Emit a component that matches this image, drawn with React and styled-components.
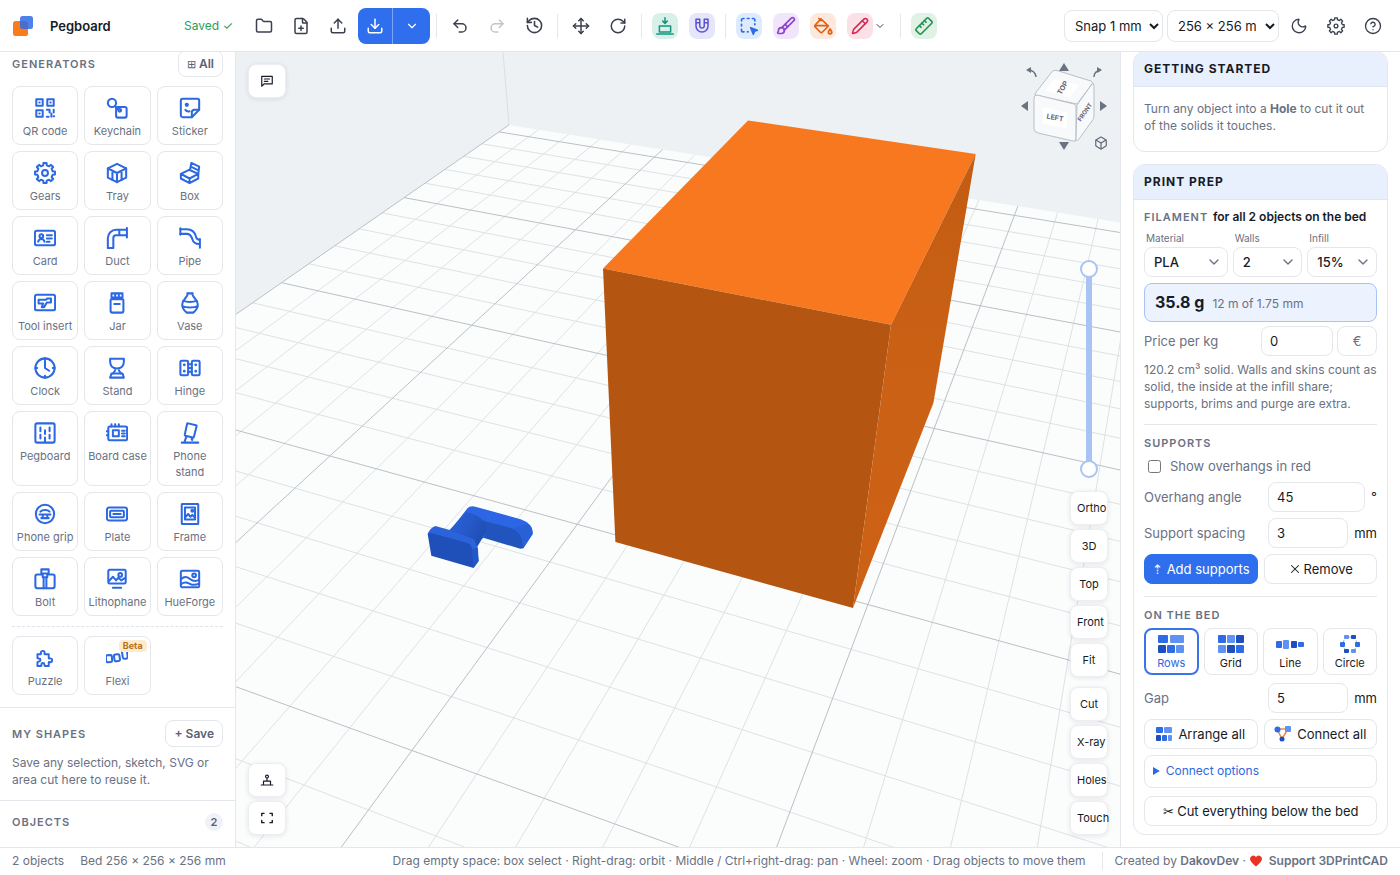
import { useState } from "react";
import styled, { createGlobalStyle, css } from "styled-components";
import {
  Box,
  Brush,
  ChevronDown,
  CircleQuestionMark,
  Download,
  FilePlus,
  Folder,
  History,
  Moon,
  Move,
  Pencil,
  Redo2,
  RotateCw,
  Undo2,
  Upload,
  X,
} from "lucide-react";

const GlobalStyle = createGlobalStyle`
  *, *::before, *::after {
    box-sizing: border-box;
  }
  body {
    margin: 0;
    background: #fff;
    color: #161b26;
    font-family: Inter, "Liberation Sans", sans-serif;
    font-size: 13px;
    line-height: 18px;
  }
  button, input, select {
    font: inherit;
    color: inherit;
  }
  button {
    cursor: pointer;
  }
`;

/* ---------- icons ---------- */

const gearPath = (teeth, outer, inner) => {
  const points = [];
  const step = (Math.PI * 2) / teeth;
  for (let i = 0; i < teeth; i++) {
    const mid = i * step - Math.PI / 2;
    [
      [-0.28, inner],
      [-0.2, outer],
      [0.2, outer],
      [0.28, inner],
    ].forEach(([offset, r]) => {
      const a = mid + offset * step;
      points.push(`${(12 + r * Math.cos(a)).toFixed(2)} ${(12 + r * Math.sin(a)).toFixed(2)}`);
    });
  }
  return `M${points.join("L")}Z`;
};

const GEAR = gearPath(8, 11, 8.6);

const Glyph = ({ size = 22, width = 2, children }) => (
  <svg
    width={size}
    height={size}
    viewBox="0 0 24 24"
    fill="none"
    stroke="currentColor"
    strokeWidth={width}
    strokeLinecap="round"
    strokeLinejoin="round"
    aria-hidden="true"
  >
    {children}
  </svg>
);

const generators = [
  {
    name: "QR code",
    icon: (
      <>
        <path d="M2.500 2.500h7v7h-7zM14.500 2.500h7v7h-7zM2.500 14.500h7v7h-7z" />
        <path d="M5.800 6h.4M17.800 6h.4M5.800 18h.4M14 14h3v3M21.500 14v3M14 21.500h2M19 18v3.500M22 21h-.5" />
      </>
    ),
  },
  {
    name: "Keychain",
    icon: (
      <>
        <circle cx="6.500" cy="6.500" r="4.500" />
        <path d="M10 10l3 3" />
        <rect x="11" y="11" width="11.500" height="11.500" rx="2" />
        <circle cx="15" cy="14.500" r="1.500" />
      </>
    ),
  },
  {
    name: "Sticker",
    icon: (
      <>
        <path d="M4 2h16a2 2 0 0 1 2 2v10l-8 8H4a2 2 0 0 1-2-2V4a2 2 0 0 1 2-2z" />
        <path d="M22 14h-5a3 3 0 0 0-3 3v5M7 14c1 1.500 3 2 4.500 1.500" />
        <circle cx="8.500" cy="8.500" r="1.200" fill="currentColor" />
      </>
    ),
  },
  {
    name: "Gears",
    icon: (
      <>
        <path d={GEAR} />
        <circle cx="12" cy="12" r="3.200" />
      </>
    ),
  },
  {
    name: "Tray",
    icon: (
      <>
        <path d="M12 2l10 5v10l-10 5-10-5V7z" />
        <path d="M2 7l10 5 10-5M12 12v10M7 9.500v10M17 9.500v10" />
      </>
    ),
  },
  {
    name: "Box",
    icon: (
      <>
        <path d="M2 13l9-4.500L21 13l-9.500 5zM2 13v5l9.500 5L21 18v-5M11.500 18v5" />
        <path d="M12 8.500l1.500-7.500 8.500 4-1 8M14 5.500l6 3" />
      </>
    ),
  },
  {
    name: "Card",
    icon: (
      <>
        <rect x="1" y="4" width="22" height="16" rx="2" />
        <circle cx="8" cy="10" r="2" />
        <path d="M4.500 16c.5-2 2-3 3.500-3s3 1 3.500 3M14 9h5.500M14 12.500h5.500M14 16h3" />
      </>
    ),
  },
  {
    name: "Duct",
    icon: (
      <>
        <path d="M2 23V12a9 9 0 0 1 9-9h11M8 23V12a3 3 0 0 1 3-3h11M2 23h6" />
        <path d="M22.800 1v10.500M14.500 3.500v5" />
      </>
    ),
  },
  {
    name: "Pipe",
    icon: (
      <>
        <path d="M1.500 2.500h7c7 0 9 4 10 8 .5 2.500 1.500 3.500 4 3.500M1.500 7.500h7c4 0 5 2.500 6 5.500.8 3 3 5.500 7.500 5.500" />
        <path d="M1.500 1.500v7M22.800 13v9.500" />
      </>
    ),
  },
  {
    name: "Tool insert",
    icon: (
      <>
        <rect x="1" y="3" width="22" height="17" rx="2" />
        <path d="M5 8.500h8l1.500-1.500h4v4.500h-4.500l-3 5H8.500l1.500-4H5z" />
      </>
    ),
  },
  {
    name: "Jar",
    icon: (
      <>
        <path d="M6 1.500h12V6H6zM6 8h12a1 1 0 0 1 1 1v11.500a2 2 0 0 1-2 2H7a2 2 0 0 1-2-2V9a1 1 0 0 1 1-1zM9 13h6" />
        <path d="M10 2v4M14 2v4" />
      </>
    ),
  },
  {
    name: "Vase",
    icon: (
      <path d="M9 1.500h6M9.500 2c0 4-6 6-6 11.500 0 4 2.500 7 5 9h7c2.500-2 5-5 5-9C20.500 8 14.500 6 14.500 2M4.500 9.500c4 2 11 2 15 0M3.500 15.500c4 2 13 2 17 0" />
    ),
  },
  {
    name: "Clock",
    icon: (
      <>
        <circle cx="12" cy="12" r="10.500" />
        <path d="M12 5v7l4.500 3M12 1.500v2M12 20.500v2M1.500 12h2M20.500 12h2" />
      </>
    ),
  },
  {
    name: "Stand",
    icon: (
      <>
        <path d="M4.500 2h15v3c0 5-3 7.500-7.500 7.500S4.500 10 4.500 5zM10 12.500c.5 3-1 4-2.500 5.500M14 12.500c-.5 3 1 4 2.500 5.500" />
        <path d="M6 18h12l1.500 4.500h-15z" />
      </>
    ),
  },
  {
    name: "Hinge",
    icon: (
      <>
        <rect x="1.500" y="4" width="8.500" height="16" rx="1.500" />
        <rect x="14" y="4" width="8.500" height="16" rx="1.500" />
        <path d="M10 8h4M10 12h4M10 16h4" />
        <path d="M5.700 8.500h.1M5.700 15.500h.1M18.200 8.500h.1M18.200 15.500h.1" strokeWidth="3" />
      </>
    ),
  },
  {
    name: "Pegboard",
    icon: (
      <>
        <rect x="1.500" y="1.500" width="21" height="21" rx="2" />
        <path d="M7 6v4M12 9v4M17 6v4M7 14v4M17 14v4M12 17v5" />
      </>
    ),
  },
  {
    name: "Board case",
    icon: (
      <>
        <rect x="2.500" y="5" width="20.500" height="15" rx="1.500" />
        <rect x="7.500" y="9" width="6.500" height="6.500" />
        <path d="M6 5V2.500M10 5V2.500M14 5V2.500M.8 10h1.500M.8 14.500h1.500M17.500 9.500h3M17.500 12.500h3M17.500 15.500h3" />
      </>
    ),
  },
  {
    name: "Phone stand",
    icon: (
      <>
        <path d="M10 1.500l8.500 2a1 1 0 0 1 .7 1.200l-3 11.600a1 1 0 0 1-1.200.7l-8-2a1 1 0 0 1-.7-1.200L8.800 2.200A1 1 0 0 1 10 1.500z" />
        <path d="M8 16l-2 6M3 22.500h18M14.500 17.500c-1 .5-1 2 0 2" />
      </>
    ),
  },
  {
    name: "Phone grip",
    icon: (
      <>
        <circle cx="12" cy="12" r="10" />
        <path d="M7 9.500c2-2.500 8-2.500 10 0M6 12.500h12M8 16.500h8M9.500 13v2.500M14.500 13v2.500" />
      </>
    ),
  },
  {
    name: "Plate",
    icon: (
      <>
        <rect x="1" y="5" width="22" height="14" rx="2.500" />
        <rect x="4.500" y="8.500" width="15" height="7" rx="1" />
        <path d="M8 12h8" />
      </>
    ),
  },
  {
    name: "Frame",
    icon: (
      <>
        <rect x="3" y="1" width="18" height="22" rx="1" />
        <rect x="6.500" y="5" width="11" height="13" />
        <path d="M7 15.500l3-3.500 2.500 3 2-2 2.500 2.500" />
        <circle cx="14.500" cy="8.500" r="1" />
      </>
    ),
  },
  {
    name: "Bolt",
    icon: (
      <>
        <path d="M8 7H3.500a2 2 0 0 0-2 2v11a2 2 0 0 0 2 2h17a2 2 0 0 0 2-2V9a2 2 0 0 0-2-2H16" />
        <path d="M8 1.500h8V6H8zM9.500 6v4h5V6M10.500 10v12M13.500 10v12" />
      </>
    ),
  },
  {
    name: "Lithophane",
    icon: (
      <>
        <rect x="2.500" y="2" width="19" height="15" rx="1.500" />
        <path d="M3.500 14l4-4.500 3.500 4 2.500-3 3 3L20.500 11M7.500 21.500h9" />
        <circle cx="15.500" cy="7.500" r="2" />
      </>
    ),
  },
  {
    name: "HueForge",
    icon: (
      <>
        <rect x="2" y="3" width="20" height="18" rx="1.500" />
        <path d="M2.500 12c4-4 7-2 9.500 0s6 3 10 1M2.500 17.500c4-3 7-1.500 10 0s6 1 9.500-.5" />
        <circle cx="16.500" cy="8" r="2" />
      </>
    ),
  },
];

const extraGenerators = [
  {
    name: "Puzzle",
    icon: (
      <path
        d="M4 6h4c1.200 0 .5-1 .5-2a2.500 2.500 0 0 1 5 0c0 1-.7 2 .5 2h5v5c0 1.200 1 .5 2 .5a2.300 2.300 0 0 1 0 5c-1 0-2-.7-2 .5v4.500h-5c-1 0-.5-1-.8-2a2 2 0 0 0-4 0c0 1 .3 2-.7 2H4v-5c0-1 1-.6 2-.8a2 2 0 0 0 0-4c-1-.2-2 .3-2-.7z"
        transform="translate(0.500 3) scale(0.820)"
        strokeWidth="2.600"
      />
    ),
  },
  {
    name: "Flexi",
    badge: "Beta",
    icon: (
      <>
        <rect x="0" y="9" width="6.500" height="7.500" rx="1.500" transform="rotate(-4 3 12)" />
        <rect x="9" y="8" width="6" height="7.500" rx="1.500" transform="rotate(-8 12 12)" />
        <path d="M17.500 5.500l.8 5.800a2 2 0 0 0 2.200 1.600l1.500-.2a2 2 0 0 0 1.600-2.200L23 5" />
      </>
    ),
  },
];

const DropIcon = () => (
  <Glyph size={18}>
    <path d="M12 1v7M9 5.500l3 3 3-3M4.500 12h15v8h-15zM1 22.500h22" />
  </Glyph>
);

const MagnetIcon = () => (
  <Glyph size={18}>
    <path d="M4 3h5v8.500a3 3 0 0 0 6 0V3h5v9a8 8 0 0 1-16 0zM4 7.500h5M15 7.500h5" />
  </Glyph>
);

const SelectIcon = () => (
  <Glyph size={20}>
    <path d="M3 6V5a2 2 0 0 1 2-2h1M10 3h2M16 3h1a2 2 0 0 1 2 2v1M3 10v2M3 16v1a2 2 0 0 0 2 2h1M10 19h1M19 9.500v1" />
    <path d="M14 14l8 3-3.500 1.300-1.300 3.500z" fill="currentColor" />
  </Glyph>
);

const BucketIcon = () => (
  <Glyph size={20}>
    <path d="M9.500 3.500l9 8.500-7.500 7.500a1.500 1.500 0 0 1-2.200 0L2.600 13a1.500 1.500 0 0 1 0-2.200zM7 3l2.500 2.500M2.500 11.500h15.500" />
    <path d="M20.500 15.500c1.200 1.800 2 2.800 2 4a2 2 0 0 1-4 0c0-1.200.8-2.200 2-4z" />
  </Glyph>
);

const RulerIcon = () => (
  <Glyph size={20}>
    <path d="M2.700 15.300L15.300 2.700a1.500 1.500 0 0 1 2.200 0l3.800 3.800a1.500 1.500 0 0 1 0 2.200L8.700 21.300a1.500 1.500 0 0 1-2.200 0l-3.800-3.800a1.500 1.500 0 0 1 0-2.200z" />
    <path d="M6.500 11.500l2 2M9.500 8.500l2 2M12.500 5.500l2 2" />
  </Glyph>
);

const SettingsIcon = () => (
  <Glyph size={18} width={1.8}>
    <path d={GEAR} />
    <circle cx="12" cy="12" r="2.500" />
  </Glyph>
);

const NoteIcon = () => (
  <Glyph size={14}>
    <path d="M3 21V4h18v13H7zM7.500 8.500h9M7.500 12.500h6" />
  </Glyph>
);

const PlaneIcon = () => (
  <Glyph size={14}>
    <path d="M12 9v5M6 14h12v6M6 14v6M2 20.500h20" />
    <circle cx="12" cy="6" r="2.500" />
  </Glyph>
);

const FullscreenIcon = () => (
  <Glyph size={14} width={2.4}>
    <path d="M3 8V4h4M17 4h4v4M21 16v4h-4M7 20H3v-4" />
  </Glyph>
);

const BLUE = "#2f6be6";
const LIGHT = "#5f92f2";
const DARK = "#1d4fc0";

const blocks = {
  Rows: [
    [0, 0, 10, 8, BLUE],
    [12, 0, 14, 8, LIGHT],
    [0, 10, 8, 8, DARK],
    [9, 10, 8, 8, BLUE],
    [18, 10, 8, 8, LIGHT],
  ],
  Grid: [
    [0, 0, 8, 8, BLUE],
    [9, 0, 8, 8, LIGHT],
    [18, 0, 8, 8, DARK],
    [0, 10, 8, 8, LIGHT],
    [9, 10, 8, 8, DARK],
    [18, 10, 8, 8, BLUE],
  ],
  Line: [
    [-1, 6, 6, 7, BLUE],
    [6, 5, 6, 9, LIGHT],
    [14, 6, 6, 7, DARK],
    [21, 7, 6, 5, BLUE],
  ],
  Circle: [
    [7, 0, 5, 4, LIGHT],
    [14, 0, 5, 4, DARK],
    [3, 7, 5, 5, BLUE],
    [18, 7, 5, 5, BLUE],
    [7, 14, 5, 4, DARK],
    [14, 14, 5, 4, LIGHT],
  ],
};

const BlockIcon = ({ name }) => (
  <svg width="28" height="18" viewBox="-1 0 28 18" aria-hidden="true">
    {name === "Circle" && (
      <circle cx="13" cy="9" r="7" fill="none" stroke="#9aa3b2" strokeDasharray="2 2" />
    )}
    {blocks[name].map(([x, y, w, h, fill]) => (
      <rect key={`${x}-${y}`} x={x} y={y} width={w} height={h} rx="1" fill={fill} />
    ))}
  </svg>
);

const ArrangeIcon = () => (
  <svg width="16" height="14" viewBox="0 0 16 14" aria-hidden="true">
    <rect width="7" height="6" rx="1" fill={BLUE} />
    <rect x="8" width="8" height="6" rx="1" fill={LIGHT} />
    <rect y="8" width="5" height="6" rx="1" fill={DARK} />
    <rect x="6" y="8" width="5" height="6" rx="1" fill={BLUE} />
    <rect x="12" y="8" width="4" height="6" rx="1" fill={LIGHT} />
  </svg>
);

const ConnectIcon = () => (
  <svg width="17" height="16" viewBox="0 0 17 16" aria-hidden="true">
    <path d="M3 3h11L8 13z" fill="none" stroke="#f08a3c" strokeWidth="1.500" />
    <circle cx="3.500" cy="3.500" r="3" fill={BLUE} />
    <rect x="11" y="0" width="6" height="6" rx="1" fill={LIGHT} />
    <circle cx="8" cy="13" r="2.500" fill={DARK} />
  </svg>
);

/* ---------- 3D scene ---------- */

const BED = 256;

// bed millimetres (from the back left corner) to screen
const project = (x, y) => {
  const w = 1 - 0.000901 * x - 0.00224 * y;
  return [
    ((272.9 + 2.689 * x - 2.247 * y) / w).toFixed(1),
    ((73 + 0.402 * x + 0.971 * y) / w).toFixed(1),
  ];
};

const line = (x1, y1, x2, y2) => `M${project(x1, y1).join(" ")}L${project(x2, y2).join(" ")}`;

const minorLines = [];
const majorLines = [];
for (let mm = 0; mm <= BED; mm += 10) {
  const target = mm % 50 === 0 ? majorLines : minorLines;
  target.push(line(mm, 0, mm, BED));
  target.push(line(0, BED - mm, BED, BED - mm));
}

const bedOutline = [
  [0, 0],
  [BED, 0],
  [BED, BED],
  [0, BED],
]
  .map(([x, y]) => project(x, y).join(","))
  .join(" ");

const Scene = () => (
  <Canvas viewBox="0 0 884 795" preserveAspectRatio="xMinYMin slice" role="img" aria-label="Model on the print bed">
    <defs>
      <linearGradient id="side" x1="0" y1="0" x2="0" y2="1">
        <stop offset="0" stopColor="#c25c12" />
        <stop offset="0.5" stopColor="#cb6115" />
        <stop offset="1" stopColor="#cd6217" />
      </linearGradient>
      <linearGradient id="stem" x1="0" y1="0" x2="1" y2="0.5">
        <stop offset="0" stopColor="#2b63dc" />
        <stop offset="0.6" stopColor="#2558c8" />
        <stop offset="1" stopColor="#1f4eb4" />
      </linearGradient>
    </defs>
    <path d="M267 0L273 73" stroke="#d9dfe4" fill="none" />
    <polygon points={bedOutline} fill="#fbfcfc" />
    <path d={minorLines.join("")} stroke="#dde2e5" fill="none" />
    <path d={majorLines.join("")} stroke="#bac0c8" fill="none" />
    <polygon points="512,68.500 739.700,102 655,272.800 367,216.500" fill="#f87820" />
    <polygon points="367,216.500 655,272.800 617,556 379.400,490" fill="#b45611" />
    <polygon points="739.700,102 697.400,351 617,556 655,272.800" fill="url(#side)" />
    <g transform="translate(164 428) scale(0.3333)">
      <path d="M150 152L203 84Q210 77 226 80L362 118Q398 130 398 162L370 205 320 190 255 172 200 200Z" fill="#2c66e4" />
      <path d="M234 118L330 143Q358 152 366 178L370 205 361 206 252 174Q262 150 234 118Z" fill="#2254be" />
      <path d="M366 178Q358 152 340 145L385 131Q400 142 398 162L370 205Z" fill="#2860d6" />
      <path d="M148 151L198 96Q260 110 260 152L232 200 200 180Z" fill="url(#stem)" />
      <path d="M83 161Q90 145 106 138L152 151 222 178 234 205 236 243 220 264 200 190Z" fill="#2c62da" />
      <path d="M83 162Q86 157 96 160L200 188Q215 192 216 208L221 264 94 227Z" fill="#1f4fb8" />
      <path d="M216 208L231 203 236 243 221 264Z" fill="#2357c6" />
    </g>
  </Canvas>
);

const NavCube = () => (
  <CubeSvg width="92" height="94" viewBox="0 0 92 94" role="img" aria-label="View cube">
    <g fill="#6b7280">
      <path d="M44 3l5 8H39zM44 90l5-8H39zM1 46l7-5v10zM87 46l-7-5v10z" />
      <path d="M6 10l5-3v6zM82 10l-5-3v6z" />
    </g>
    <path d="M8 10q7 0 8 7M74 17q0-6 7-7" fill="none" stroke="#6b7280" strokeWidth="1.500" />
    <g fill="#f8f9fa" stroke="#b9bfc8" strokeLinejoin="round">
      <path d="M34 10.500Q35 10 37 10.500L71 21Q73 22 72 24L57 44 15 35Q15 33 17 31L31 13Q32 11 34 10.500z" />
      <path d="M17 35L54 44Q56 45 56 47V79Q56 82 53 81L18 73Q14 72 14 69V38Q14 35 17 35z" />
      <path d="M57 45L72 24Q74 22 74 26V56Q74 59 72 61L59 79Q56 82 56 79z" />
    </g>
    <path d="M34 19l25 6-9 12-25-6z" fill="#fff" />
    <path d="M23 47l24 6v16l-24-6z" fill="#fff" />
    <CubeText x="43" y="30" transform="rotate(-58 43 28)">TOP</CubeText>
    <CubeText x="35" y="60" transform="rotate(10 35 58)">LEFT</CubeText>
    <CubeText x="65" y="54" $small transform="rotate(-56 65 52)">FRONT</CubeText>
  </CubeSvg>
);

/* ---------- app ---------- */

const views = ["Ortho", "3D", "Top", "Front", "Fit"];
const modes = ["Cut", "X-ray", "Holes", "Touch"];

const Tool = ({ label, icon, tint, muted }) => (
  <ToolButton type="button" aria-label={label} title={label} $muted={muted}>
    {tint ? <Chip $tint={tint}>{icon}</Chip> : icon}
  </ToolButton>
);

const Header = () => (
  <TopBar>
    <Brand>
      <svg width="20" height="20" viewBox="0 0 20 20" aria-hidden="true">
        <rect x="0" y="5" width="15" height="15" rx="2.500" fill="#f97b1c" />
        <rect x="7" y="0" width="13" height="13" rx="2.500" fill="#2f6be6" opacity="0.850" />
      </svg>
      <ProjectName>Pegboard</ProjectName>
    </Brand>
    <Saved>Saved ✓</Saved>
    <Tools>
      <Tool label="Open" icon={<Folder size={18} />} />
      <Tool label="New" icon={<FilePlus size={18} />} />
      <Tool label="Import" icon={<Upload size={18} />} />
      <Export>
        <ExportButton type="button" aria-label="Export">
          <Download size={18} />
        </ExportButton>
        <ExportMenu type="button" aria-label="Export options">
          <ChevronDown size={14} />
        </ExportMenu>
      </Export>
      <Rule />
      <Tool label="Undo" icon={<Undo2 size={18} />} />
      <Tool label="Redo" icon={<Redo2 size={18} />} muted />
      <Tool label="History" icon={<History size={19} />} />
      <Rule />
      <Tool label="Move" icon={<Move size={18} />} />
      <Tool label="Rotate" icon={<RotateCw size={18} />} />
      <Rule />
      <Tool label="Drop to bed" icon={<DropIcon />} tint={["#d9f0ea", "#12977f"]} />
      <Tool label="Magnet" icon={<MagnetIcon />} tint={["#e6e6fb", "#5b50d6"]} />
      <Rule />
      <Tool label="Area select" icon={<SelectIcon />} tint={["#deebfe", "#2f6be6"]} />
      <Tool label="Brush" icon={<Brush size={20} />} tint={["#f0e5fa", "#8b45cc"]} />
      <Tool label="Fill" icon={<BucketIcon />} tint={["#fce8dc", "#e2600f"]} />
      <Tool label="Draw" icon={<Pencil size={18} />} tint={["#fbe1e7", "#d92550"]} />
      <DrawMenu type="button" aria-label="Draw options">
        <ChevronDown size={12} />
      </DrawMenu>
      <Rule />
      <Tool label="Measure" icon={<RulerIcon />} tint={["#dff2e5", "#22934f"]} />
    </Tools>
    <Tools $end>
      <TopSelect aria-label="Snap">
        <option>Snap 1 mm</option>
      </TopSelect>
      <TopSelect aria-label="Bed size" $wide>
        <option>256 × 256 mm</option>
      </TopSelect>
      <Tool label="Dark mode" icon={<Moon size={18} strokeWidth={1.8} />} />
      <Tool label="Settings" icon={<SettingsIcon />} />
      <Tool label="Help" icon={<CircleQuestionMark size={18} strokeWidth={1.8} />} />
    </Tools>
  </TopBar>
);

const Generator = ({ name, icon, badge }) => (
  <GeneratorTile type="button">
    <Glyph width={2.2}>{icon}</Glyph>
    {name}
    {badge && <Badge>{badge}</Badge>}
  </GeneratorTile>
);

const Sidebar = () => (
  <LeftPanel>
    <GeneratorSection>
      <SectionHead>
        <SectionTitle>Generators</SectionTitle>
        <SmallButton type="button">
          <SquareGlyph>⊞</SquareGlyph> All
        </SmallButton>
      </SectionHead>
      <TileGrid>
        {generators.map((item) => (
          <Generator key={item.name} {...item} />
        ))}
      </TileGrid>
      <Dashed />
      <TileGrid>
        {extraGenerators.map((item) => (
          <Generator key={item.name} {...item} />
        ))}
      </TileGrid>
    </GeneratorSection>
    <Section>
      <SectionHead>
        <SectionTitle>My shapes</SectionTitle>
        <SmallButton type="button">+ Save</SmallButton>
      </SectionHead>
      <Hint>Save any selection, sketch, SVG or area cut here to reuse it.</Hint>
    </Section>
    <Section>
      <SectionHead $flat>
        <SectionTitle>Objects</SectionTitle>
        <Count>2</Count>
      </SectionHead>
    </Section>
  </LeftPanel>
);

const Viewport = () => {
  const [range, setRange] = useState([0, 100]);
  return (
    <Stage>
      <Scene />
      <TopLeft>
        <FloatButton type="button" aria-label="Notes">
          <NoteIcon />
        </FloatButton>
      </TopLeft>
      <BottomLeft>
        <FloatButton type="button" aria-label="Work plane">
          <PlaneIcon />
        </FloatButton>
        <FloatButton type="button" aria-label="Full screen">
          <FullscreenIcon />
        </FloatButton>
      </BottomLeft>
      <CubeSpot>
        <NavCube />
        <HomeButton type="button" aria-label="Home view">
          <Box size={14} />
        </HomeButton>
      </CubeSpot>
      <RightStack>
        <LayerRange>
          <LayerInput
            type="range"
            aria-label="Top layer"
            value={range[1]}
            onChange={(e) => setRange([range[0], Number(e.target.value)])}
          />
          <LayerInput
            type="range"
            aria-label="Bottom layer"
            value={range[0]}
            onChange={(e) => setRange([Number(e.target.value), range[1]])}
          />
        </LayerRange>
        <ButtonColumn>
          {views.map((name) => (
            <FloatButton key={name} type="button">
              {name}
            </FloatButton>
          ))}
        </ButtonColumn>
        <ButtonColumn>
          {modes.map((name) => (
            <FloatButton key={name} type="button">
              {name}
            </FloatButton>
          ))}
        </ButtonColumn>
      </RightStack>
    </Stage>
  );
};

const filament = [
  ["Material", "PLA"],
  ["Walls", "2"],
  ["Infill", "15%"],
];

const Inspector = () => {
  const [layout, setLayout] = useState("Rows");
  return (
    <RightPanel>
      <Card $clipped>
        <CardTitle>Getting started</CardTitle>
        <CardText>
          Turn any object into a <b>Hole</b> to cut it out of the solids it touches.
        </CardText>
      </Card>
      <Card>
        <CardTitle>Print prep</CardTitle>
        <Group>
          <GroupTitle>
            Filament <Scope>for all 2 objects on the bed</Scope>
          </GroupTitle>
          <FilamentGrid>
            {filament.map(([label, value]) => (
              <Field key={label}>
                {label}
                <SelectBox>
                  <Select>
                    <option>{value}</option>
                  </Select>
                  <ChevronDown size={16} />
                </SelectBox>
              </Field>
            ))}
          </FilamentGrid>
          <Weight>
            <strong>35.8 g</strong>
            <span>12 m of 1.75 mm</span>
          </Weight>
          <PriceRow>
            <Label htmlFor="price">Price per kg</Label>
            <TextInput id="price" defaultValue="0" $width="72px" />
            <Currency type="button">€</Currency>
          </PriceRow>
          <Note>
            120.2 cm³ solid. Walls and skins count as solid, the inside at the infill share; supports, brims and
            purge are extra.
          </Note>
        </Group>
        <Group>
          <GroupTitle>Supports</GroupTitle>
          <CheckLabel>
            <input type="checkbox" />
            Show overhangs in red
          </CheckLabel>
          <Row>
            <Label htmlFor="angle">Overhang angle</Label>
            <Unit>
              <TextInput id="angle" defaultValue="45" />°
            </Unit>
          </Row>
          <Row>
            <Label htmlFor="spacing">Support spacing</Label>
            <Unit>
              <TextInput id="spacing" defaultValue="3" />
              mm
            </Unit>
          </Row>
          <Pair>
            <Button type="button" $primary>
              ⇡ Add supports
            </Button>
            <Button type="button" $tight>
              <X size={14} strokeWidth={1.8} /> Remove
            </Button>
          </Pair>
        </Group>
        <Group>
          <GroupTitle>On the bed</GroupTitle>
          <LayoutGrid>
            {Object.keys(blocks).map((name) => (
              <LayoutTile
                key={name}
                type="button"
                aria-pressed={layout === name}
                $active={layout === name}
                onClick={() => setLayout(name)}
              >
                <BlockIcon name={name} />
                {name}
              </LayoutTile>
            ))}
          </LayoutGrid>
          <Row>
            <Label htmlFor="gap">Gap</Label>
            <Unit>
              <TextInput id="gap" defaultValue="5" />
              mm
            </Unit>
          </Row>
          <Pair>
            <Button type="button">
              <ArrangeIcon /> Arrange all
            </Button>
            <Button type="button">
              <ConnectIcon /> Connect all
            </Button>
          </Pair>
          <Options>
            <summary>Connect options</summary>
          </Options>
          <Button type="button">✂ Cut everything below the bed</Button>
        </Group>
      </Card>
    </RightPanel>
  );
};

const Footer = () => (
  <StatusBar>
    <span>2 objects</span>
    <span>Bed 256 × 256 × 256 mm</span>
    <Tips>
      Drag empty space: box select · Right-drag: orbit · Middle / Ctrl+right-drag: pan · Wheel: zoom · Drag objects
      to move them
    </Tips>
    <Credits>
      Created by <a href="#author">DakovDev</a> ·{" "}
      <svg width="14" height="12" viewBox="0 0 24 22" aria-hidden="true">
        <path
          d="M12 21C5 15.500 1 11.500 1 7a6 6 0 0 1 11-3.300A6 6 0 0 1 23 7c0 4.500-4 8.500-11 14z"
          fill="#ea3323"
        />
      </svg>{" "}
      <a href="#support">Support 3DPrintCAD</a>
    </Credits>
  </StatusBar>
);

export default function App() {
  return (
    <Page>
      <GlobalStyle />
      <Header />
      <Sidebar />
      <Viewport />
      <Inspector />
      <Footer />
    </Page>
  );
}

/* ---------- styles ---------- */

const line1 = "1px solid #e3e6eb";

const Page = styled.div`
  display: grid;
  grid-template: 52px minmax(0, 1fr) 28px / 236px minmax(0, 1fr) 280px;
  height: 100vh;
  overflow: hidden;
`;

const TopBar = styled.header`
  grid-column: 1 / -1;
  display: flex;
  align-items: center;
  padding: 0 9px 0 13px;
  border-bottom: ${line1};
`;

const Brand = styled.div`
  display: flex;
  align-items: center;
  gap: 17px;
  width: 171px;
`;

const ProjectName = styled.span`
  font-weight: 600;
`;

const Saved = styled.span`
  width: 62px;
  color: #26a155;
  font-size: 12px;
`;

const Tools = styled.div`
  display: flex;
  align-items: center;
  gap: 1px;
  margin-left: ${(props) => (props.$end ? "auto" : "0")};
`;

const ToolButton = styled.button`
  display: grid;
  place-items: center;
  width: 36px;
  height: 36px;
  padding: 0;
  border: 0;
  background: none;
  color: ${(props) => (props.$muted ? "#c0c4cb" : "#3a4050")};
`;

const Chip = styled.span`
  display: grid;
  place-items: center;
  width: 26px;
  height: 26px;
  border-radius: 8px;
  background: ${(props) => props.$tint[0]};
  color: ${(props) => props.$tint[1]};
`;

const Rule = styled.span`
  width: 1px;
  height: 24px;
  margin: 0 4px;
  background: #e3e6eb;
`;

const Export = styled.div`
  display: flex;
  margin: 0 1px;
  border-radius: 8px;
  overflow: hidden;
`;

const ExportButton = styled.button`
  display: grid;
  place-items: center;
  width: 34px;
  height: 36px;
  padding: 0;
  border: 0;
  background: #2f6fed;
  color: #fff;
`;

const ExportMenu = styled(ExportButton)`
  width: 38px;
  border-left: 1px solid #7da5f5;
`;

const DrawMenu = styled.button`
  display: grid;
  place-items: center;
  width: 24px;
  height: 36px;
  margin-left: -8px;
  padding: 0 6px 0 0;
  border: 0;
  background: none;
  color: #3a4050;
`;

const TopSelect = styled.select`
  width: ${(props) => (props.$wide ? "112px" : "99px")};
  height: 32px;
  margin-right: ${(props) => (props.$wide ? "1px" : "3px")};
  padding: ${(props) => (props.$wide ? "0 6px" : "0 2px 0 6px")};
  border: ${line1};
  border-radius: 8px;
  background: #fff;
`;

const LeftPanel = styled.aside`
  border-right: ${line1};
  overflow: hidden;
`;

const Section = styled.section`
  padding: 12px;
  border-top: ${line1};
`;

const GeneratorSection = styled.section`
  margin-top: -2px;
  padding: 0 12px 12px;
`;

const SectionHead = styled.div`
  display: flex;
  align-items: center;
  justify-content: space-between;
  margin-bottom: ${(props) => (props.$flat ? "0" : "7px")};
`;

const SectionTitle = styled.h2`
  margin: 0;
  color: #6a7183;
  font-size: 11px;
  font-weight: 600;
  letter-spacing: 1px;
  text-transform: uppercase;
`;

const SmallButton = styled.button`
  height: 27px;
  padding: 0 8px;
  border: ${line1};
  border-radius: 8px;
  background: #fff;
  color: #5b6275;
  font-size: 12px;
  font-weight: 600;
`;

const SquareGlyph = styled.span`
  font-size: 11px;
  font-weight: 400;
`;

const TileGrid = styled.div`
  display: grid;
  grid-template-columns: repeat(3, minmax(0, 1fr));
  gap: 6px;
  margin-top: 9px;
`;

const GeneratorTile = styled.button`
  position: relative;
  display: flex;
  flex-direction: column;
  align-items: center;
  justify-content: flex-start;
  min-height: 59px;
  padding: 10px 2px 5px;
  border: ${line1};
  border-radius: 8px;
  background: #fff;
  color: #6a7183;
  font-size: 11px;
  line-height: 16px;
  svg {
    flex: none;
    margin-bottom: 4px;
    color: #2b68e2;
  }
`;

const Badge = styled.span`
  position: absolute;
  top: 3px;
  right: 3px;
  padding: 0 4px;
  border-radius: 4px;
  background: #fdebcf;
  color: #b7700f;
  font-size: 9px;
  font-weight: 700;
  line-height: 12px;
`;

const Dashed = styled.hr`
  margin: 10px 0 0;
  border: 0;
  border-top: 1px dashed #dfe2e8;
`;

const Hint = styled.p`
  margin: 0;
  color: #6a7183;
  font-size: 12px;
  line-height: 17px;
`;

const Count = styled.span`
  min-width: 18px;
  border-radius: 9px;
  background: #f0f2f7;
  color: #5b6275;
  font-size: 11px;
  font-weight: 600;
  text-align: center;
`;

const Stage = styled.main`
  position: relative;
  background: #edf1f4;
  overflow: hidden;
`;

const Canvas = styled.svg`
  display: block;
  width: 100%;
  height: 100%;
`;

const TopLeft = styled.div`
  position: absolute;
  top: 12px;
  left: 12px;
`;

const ButtonColumn = styled.div`
  display: flex;
  flex-direction: column;
  gap: 4px;
`;

const BottomLeft = styled(ButtonColumn)`
  position: absolute;
  bottom: 12px;
  left: 12px;
`;

const RightStack = styled.div`
  position: absolute;
  right: 12px;
  bottom: 12px;
  display: flex;
  flex-direction: column;
  align-items: center;
  gap: 10px;
`;

const FloatButton = styled.button`
  width: 38px;
  height: 34px;
  padding: 0 6px;
  border: 1px solid #eceef1;
  border-radius: 8px;
  background: #fff;
  box-shadow: 0 1px 5px rgba(20, 30, 50, 0.1);
  font-size: 11px;
  white-space: nowrap;
  svg {
    display: block;
    margin: 0 auto;
  }
`;

const LayerRange = styled.div`
  display: grid;
  justify-content: center;
  width: 18px;
  height: 218px;
  margin-bottom: 3px;
  background: linear-gradient(#a9c3f4, #a9c3f4) center / 6px 200px no-repeat;
`;

const thumb = css`
  appearance: none;
  width: 18px;
  height: 18px;
  border: 2px solid #a9c3f4;
  border-radius: 50%;
  background: #fff;
  pointer-events: auto;
`;

const LayerInput = styled.input`
  grid-area: 1 / 1;
  appearance: none;
  writing-mode: vertical-lr;
  direction: rtl;
  width: 18px;
  height: 218px;
  margin: 0;
  background: none;
  pointer-events: none;
  &::-webkit-slider-thumb {
    ${thumb}
  }
`;

const CubeSpot = styled.div`
  position: absolute;
  top: 8px;
  right: 8px;
`;

const CubeSvg = styled.svg`
  display: block;
`;

const CubeText = styled.text`
  fill: #5f6675;
  font-size: ${(props) => (props.$small ? "6px" : "7px")};
  font-weight: 700;
  text-anchor: middle;
`;

const HomeButton = styled.button`
  position: absolute;
  right: 4px;
  bottom: 4px;
  padding: 0;
  border: 0;
  background: none;
  color: #5f6675;
  line-height: 0;
`;

const RightPanel = styled.aside`
  display: flex;
  flex-direction: column;
  gap: 12px;
  padding: 0 12px;
  border-left: ${line1};
  overflow: hidden;
`;

const Card = styled.section`
  flex: none;
  margin-top: ${(props) => (props.$clipped ? "-1px" : "0")};
  border: ${line1};
  border-radius: 12px;
  overflow: hidden;
`;

const CardTitle = styled.h2`
  margin: 0;
  padding: 8px 10px;
  border-bottom: 1px solid #dde4f2;
  background: #e8effd;
  font-size: 12px;
  font-weight: 700;
  letter-spacing: 1px;
  text-transform: uppercase;
`;

const CardText = styled.p`
  margin: 0;
  padding: 13px 10px 17px;
  color: #6a7183;
  font-size: 12px;
  line-height: 17px;
`;

const Group = styled.div`
  display: flex;
  flex-direction: column;
  gap: 6px;
  margin: 0 10px;
  padding: 8px 0 12px;
  & + & {
    padding-top: 9px;
    border-top: ${line1};
  }
  &:last-child {
    padding-bottom: 8px;
  }
`;

const GroupTitle = styled.h3`
  margin: 0 0 -2px;
  color: #6a7183;
  font-size: 11px;
  font-weight: 600;
  letter-spacing: 1px;
  text-transform: uppercase;
`;

const Scope = styled.span`
  margin-left: 1px;
  color: #161b26;
  font-size: 12px;
  letter-spacing: normal;
  text-transform: none;
`;

const FilamentGrid = styled.div`
  display: grid;
  grid-template-columns: 6fr 5fr 5fr;
  gap: 5px;
`;

const Field = styled.label`
  color: #6a7183;
  font-size: 10px;
  line-height: 16px;
  text-indent: 2px;
`;

const SelectBox = styled.span`
  display: grid;
  align-items: center;
  margin-top: 1px;
  svg {
    grid-area: 1 / 1;
    justify-self: end;
    margin-right: 6px;
    pointer-events: none;
  }
`;

const control = css`
  height: 30px;
  border: ${line1};
  border-radius: 8px;
  background: #fff;
  color: #161b26;
  font-size: 13px;
`;

const Select = styled.select`
  ${control}
  grid-area: 1 / 1;
  appearance: none;
  width: 100%;
  padding: 0 9px;
  font-weight: 500;
  text-indent: 0;
`;

const Weight = styled.div`
  display: flex;
  align-items: baseline;
  gap: 8px;
  padding: 8px 10px 7px;
  border: 1px solid #a9c3f4;
  border-radius: 8px;
  background: #ecf2fe;
  line-height: 20px;
  strong {
    font-size: 16px;
  }
  span {
    color: #6a7183;
    font-size: 12px;
  }
`;

const Row = styled.div`
  display: grid;
  grid-template-columns: minmax(0, 1fr) 109px;
  align-items: center;
`;

const PriceRow = styled.div`
  display: flex;
  align-items: center;
  gap: 4px;
  margin: -2px 0 -1px;
`;

const Label = styled.label`
  flex: 1;
  color: #6a7183;
`;

const TextInput = styled.input`
  ${control}
  width: ${(props) => props.$width || "auto"};
  min-width: 0;
  padding: 0 8px;
`;

const Unit = styled.div`
  display: flex;
  align-items: center;
  gap: 6px;
  ${TextInput} {
    flex: 1;
  }
`;

const Currency = styled.button`
  ${control}
  width: 40px;
  padding: 0;
  color: #6a7183;
`;

const Note = styled.p`
  margin: 0;
  color: #6a7183;
  font-size: 12px;
  line-height: 17px;
`;

const CheckLabel = styled.label`
  display: flex;
  align-items: center;
  gap: 9px;
  height: 18px;
  margin: 1px 0;
  color: #6a7183;
  input {
    width: 13px;
    height: 13px;
    margin: 0 0 0 4px;
  }
`;

const Pair = styled.div`
  display: grid;
  grid-template-columns: 1fr 1fr;
  gap: 6px;
`;

const Button = styled.button`
  ${control}
  display: flex;
  align-items: center;
  justify-content: center;
  gap: ${(props) => (props.$tight ? "2px" : "6px")};
  padding: 0;
  white-space: nowrap;
  ${(props) =>
    props.$primary &&
    css`
      border-color: #2f6fed;
      background: #2f6fed;
      color: #fff;
    `}
`;

const LayoutGrid = styled.div`
  display: grid;
  grid-template-columns: repeat(4, minmax(0, 1fr));
  gap: 5px;
  margin-bottom: 2px;
`;

const LayoutTile = styled.button`
  display: flex;
  flex-direction: column;
  align-items: center;
  gap: 3px;
  height: 47px;
  padding: ${(props) => (props.$active ? "5px 0 0" : "6px 0 0")};
  border: ${(props) => (props.$active ? "2px solid #3b73e8" : "1px solid #e3e6eb")};
  border-radius: 8px;
  background: #fff;
  color: ${(props) => (props.$active ? "#2b68e2" : "#161b26")};
  font-size: 11px;
  line-height: 14px;
  svg {
    flex: none;
  }
`;

const Options = styled.details`
  margin-bottom: 2px;
  padding: 6px 8px 7px;
  border: ${line1};
  border-radius: 8px;
  color: #2b68e2;
  font-size: 12px;
`;

const StatusBar = styled.footer`
  grid-column: 1 / -1;
  display: flex;
  align-items: center;
  gap: 16px;
  padding: 0 12px 2px;
  border-top: ${line1};
  color: #6a7183;
  font-size: 12px;
  white-space: nowrap;
`;

const Tips = styled.span`
  margin-left: auto;
`;

const Credits = styled.span`
  padding-left: 12px;
  border-left: ${line1};
  a {
    color: inherit;
    font-weight: 600;
    text-decoration: none;
  }
  svg {
    margin-right: 2px;
    vertical-align: -2px;
  }
`;
